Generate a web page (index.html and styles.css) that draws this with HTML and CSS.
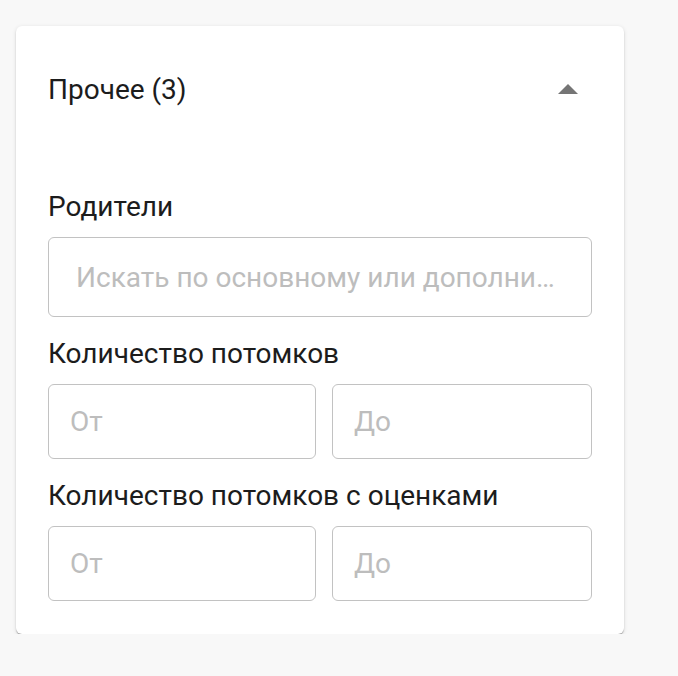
FILE: index.html
```html
<!DOCTYPE html>
<html lang="ru">
<head>
    <meta charset="UTF-8">
    <meta name="viewport" content="width=device-width, initial-scale=1.0">
    <title>Фильтры</title>
    <link rel="stylesheet" href="styles.css">
</head>
<body>

    <div class="panel">
        <div class="panel-header">
            <span class="panel-title">Прочее (3)</span>
            <!-- Стрелка свернуть -->
            <svg class="toggle" width="20" height="10" viewBox="0 0 20 10">
                <path d="M0 10 L10 0 L20 10 Z" fill="#757575"/>
            </svg>
        </div>

        <div class="panel-body">
            <div class="field">
                <label class="field-label" for="parents">Родители</label>
                <input type="text" id="parents" class="input input-wide" placeholder="Искать по основному или дополнительному имени">
            </div>

            <div class="field">
                <label class="field-label">Количество потомков</label>
                <div class="range">
                    <input type="number" class="input" placeholder="От">
                    <input type="number" class="input" placeholder="До">
                </div>
            </div>

            <div class="field">
                <label class="field-label">Количество потомков с оценками</label>
                <div class="range">
                    <input type="number" class="input" placeholder="От">
                    <input type="number" class="input" placeholder="До">
                </div>
            </div>
        </div>
    </div>

</body>
</html>
```

FILE: styles.css
```css
body {
    font-family: Roboto, "Liberation Sans", Arial, sans-serif;
    margin: 0;
    padding: 26px 0 0 16px;
    background-color: #f8f8f8;
    color: #1c1c1c;
}
.panel {
    width: 608px;
    box-sizing: border-box;
    padding: 0 32px 33px;
    background-color: white;
    border-radius: 6px;
    box-shadow: 0 2px 2px -1px rgba(0, 0, 0, 0.3), 0 1px 1px 0 rgba(0, 0, 0, 0.14), 0 1px 4px 0 rgba(0, 0, 0, 0.12);
}
.panel-header {
    display: flex;
    justify-content: space-between;
    align-items: center;
    padding-top: 48px;
    height: 32px;
}
.panel-title {
    font-size: 28px;
    line-height: 32px;
}
.toggle {
    margin-right: 14px;
    margin-top: -2px;
}
.panel-body {
    margin-top: 85px;
    display: flex;
    flex-direction: column;
    gap: 21px;
}
.field-label {
    display: block;
    font-size: 28px;
    line-height: 32px;
    margin-bottom: 14px;
}
.input {
    display: block;
    width: 100%;
    box-sizing: border-box;
    height: 75px;
    padding: 0 21px;
    font-family: inherit;
    font-size: 28px;
    color: #1c1c1c;
    border: 1px solid #c2c2c2;
    border-radius: 6px;
    background: white;
    outline: none;
    text-overflow: ellipsis;
    -moz-appearance: textfield;
}
.input::placeholder {
    color: #bdbdbd;
}
.input::-webkit-outer-spin-button,
.input::-webkit-inner-spin-button {
    -webkit-appearance: none;
    margin: 0;
}
.input-wide {
    height: 80px;
    padding: 0 27px;
}
.range {
    display: grid;
    grid-template-columns: 268px 1fr;
    gap: 16px;
}
```
